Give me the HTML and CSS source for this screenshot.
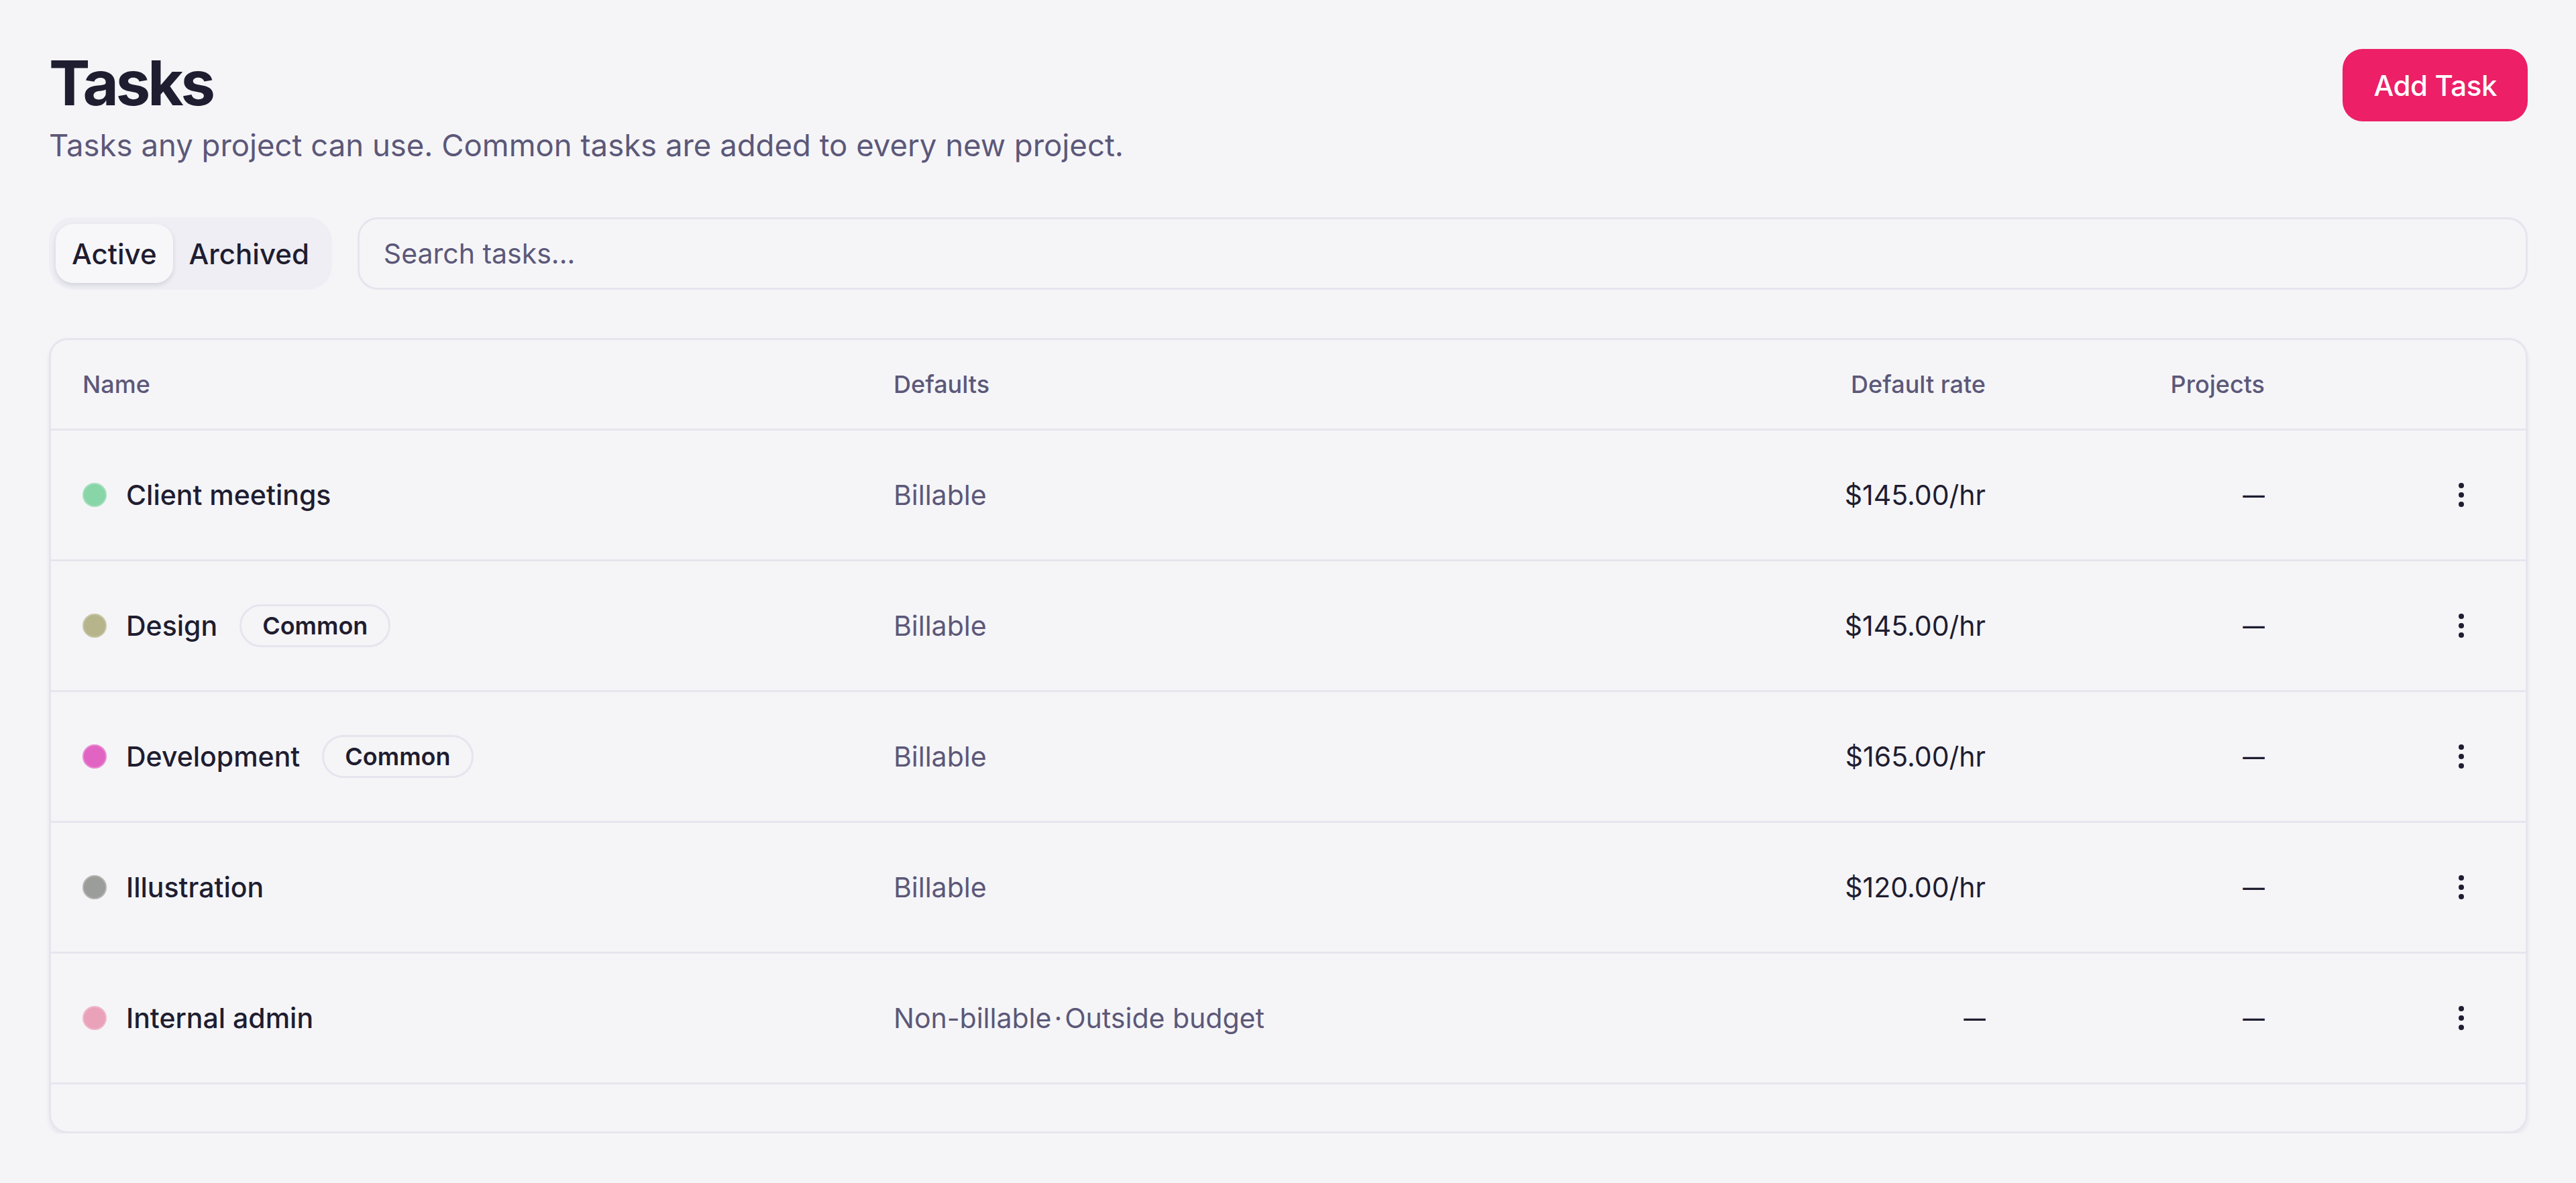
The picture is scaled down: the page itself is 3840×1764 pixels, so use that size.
FILE: index.html
```html
<!DOCTYPE html>
<html lang="en">
<head>
  <meta charset="UTF-8" />
  <title>Tasks</title>
  <link rel="stylesheet" href="styles.css">
</head>
<body>

<div class="page">

  <!-- Page header -->
  <div class="page-head">
    <div>
      <h1>Tasks</h1>
      <p class="subtitle">Tasks any project can use. Common tasks are added to every new project.</p>
    </div>
    <button class="btn-add">Add Task</button>
  </div>

  <!-- Filters -->
  <div class="toolbar">
    <div class="tabs">
      <button class="tab active">Active</button>
      <button class="tab">Archived</button>
    </div>
    <input class="search" type="text" placeholder="Search tasks..." />
  </div>

  <!-- Task list -->
  <div class="card">
    <div class="row head">
      <div>Name</div>
      <div>Defaults</div>
      <div class="num">Default rate</div>
      <div class="num">Projects</div>
      <div></div>
    </div>

    <div class="row">
      <div class="name"><span class="dot dot-green"></span>Client meetings</div>
      <div class="muted">Billable</div>
      <div class="num">$145.00/hr</div>
      <div class="num"><span class="dash">&mdash;</span></div>
      <div class="act"><button class="kebab"><svg width="8" height="36" viewBox="0 0 8 36"><circle cx="4" cy="4" r="4"/><circle cx="4" cy="18" r="4"/><circle cx="4" cy="32" r="4"/></svg></button></div>
    </div>

    <div class="row">
      <div class="name"><span class="dot dot-olive"></span>Design <span class="badge">Common</span></div>
      <div class="muted">Billable</div>
      <div class="num">$145.00/hr</div>
      <div class="num"><span class="dash">&mdash;</span></div>
      <div class="act"><button class="kebab"><svg width="8" height="36" viewBox="0 0 8 36"><circle cx="4" cy="4" r="4"/><circle cx="4" cy="18" r="4"/><circle cx="4" cy="32" r="4"/></svg></button></div>
    </div>

    <div class="row">
      <div class="name"><span class="dot dot-pink"></span>Development <span class="badge">Common</span></div>
      <div class="muted">Billable</div>
      <div class="num">$165.00/hr</div>
      <div class="num"><span class="dash">&mdash;</span></div>
      <div class="act"><button class="kebab"><svg width="8" height="36" viewBox="0 0 8 36"><circle cx="4" cy="4" r="4"/><circle cx="4" cy="18" r="4"/><circle cx="4" cy="32" r="4"/></svg></button></div>
    </div>

    <div class="row">
      <div class="name"><span class="dot dot-gray"></span>Illustration</div>
      <div class="muted">Billable</div>
      <div class="num">$120.00/hr</div>
      <div class="num"><span class="dash">&mdash;</span></div>
      <div class="act"><button class="kebab"><svg width="8" height="36" viewBox="0 0 8 36"><circle cx="4" cy="4" r="4"/><circle cx="4" cy="18" r="4"/><circle cx="4" cy="32" r="4"/></svg></button></div>
    </div>

    <div class="row">
      <div class="name"><span class="dot dot-rose"></span>Internal admin</div>
      <div class="muted">Non-billable<span class="sep">&middot;</span>Outside budget</div>
      <div class="num"><span class="dash">&mdash;</span></div>
      <div class="num"><span class="dash">&mdash;</span></div>
      <div class="act"><button class="kebab"><svg width="8" height="36" viewBox="0 0 8 36"><circle cx="4" cy="4" r="4"/><circle cx="4" cy="18" r="4"/><circle cx="4" cy="32" r="4"/></svg></button></div>
    </div>

    <div class="card-foot"></div>
  </div>

</div>

</body>
</html>
```

FILE: styles.css
```css
body {
  margin: 0;
  background: #f5f5f8;
  font-family: Inter, "Noto Sans", sans-serif;
  color: #1f1d30;
}

.page {
  padding: 73px 72px 0 73px;
}

/* header */
.page-head {
  display: flex;
  justify-content: space-between;
  align-items: flex-start;
}

h1 {
  margin: 0;
  font-size: 92px;
  line-height: 101px;
  font-weight: 700;
  letter-spacing: -0.045em;
}

.subtitle {
  margin: 11px 0 0;
  font-size: 45.5px;
  line-height: 63px;
  color: #5c5878;
}

.btn-add {
  height: 108px;
  padding: 0 46px;
  border: none;
  border-radius: 30px;
  background: #ec1f67;
  color: #fff;
  font-family: inherit;
  font-size: 42px;
  font-weight: 500;
  letter-spacing: -0.01em;
  cursor: pointer;
}

/* toolbar */
.toolbar {
  display: flex;
  gap: 38px;
  margin-top: 76px;
}

.tabs {
  display: flex;
  padding: 10px;
  background: #eeeef4;
  border-radius: 36px;
}

.tab {
  height: 88px;
  padding: 0 24px;
  border: none;
  border-radius: 26px;
  background: transparent;
  color: #1f1d30;
  font-family: inherit;
  font-size: 42px;
  font-weight: 500;
  cursor: pointer;
}

.tab.active {
  background: #f7f7fa;
  box-shadow: 0 3px 7px rgba(30, 25, 60, 0.13);
}

.search {
  flex: 1;
  height: 108px;
  box-sizing: border-box;
  padding: 0 36px;
  border: 3px solid #e6e5ee;
  border-radius: 30px;
  background: #f5f5f8;
  font-family: inherit;
  font-size: 41px;
  color: #1f1d30;
  outline: none;
}

.search::placeholder {
  color: #5c5878;
}

/* table card */
.card {
  margin-top: 72px;
  border: 3px solid #e6e5ee;
  border-radius: 28px;
  box-shadow: 0 4px 6px rgba(30, 25, 60, 0.07);
  overflow: hidden;
}

.row {
  display: grid;
  grid-template-columns: 1209px 1028px 600px 416px 1fr;
  align-items: center;
  height: 192px;
  padding: 0 48px 0 47px;
  border-bottom: 3px solid #e6e5ee;
  font-size: 41px;
}

.row.head {
  height: 132px;
  font-size: 36px;
  font-weight: 500;
  color: #5c5878;
}

.num {
  text-align: right;
}

.dash {
  display: inline-block;
  transform: scaleX(0.8);
  transform-origin: right center;
}

.muted {
  color: #5c5878;
}

.name {
  display: flex;
  align-items: center;
  font-weight: 500;
}

.dot {
  width: 36px;
  height: 36px;
  border-radius: 50%;
  margin-right: 29px;
  box-shadow: inset 0 0 0 2px rgba(255, 255, 255, 0.25);
}

.dot-green { background: #88d5a8; }
.dot-olive { background: #b6b48a; }
.dot-pink  { background: #e264c2; }
.dot-gray  { background: #9b9d9a; }
.dot-rose  { background: #e9a2b9; }

.badge {
  margin-left: 33px;
  padding: 0 31px;
  height: 58px;
  line-height: 58px;
  border: 3px solid #e6e5ee;
  border-radius: 40px;
  font-size: 36px;
  font-weight: 600;
}

.sep {
  margin: 0 4px;
}

.act {
  display: flex;
  justify-content: flex-end;
}

.kebab {
  width: 96px;
  height: 80px;
  border: none;
  background: transparent;
  display: flex;
  align-items: center;
  justify-content: center;
  cursor: pointer;
}

.kebab svg {
  fill: #1f1d30;
}

.card-foot {
  height: 70px;
}
```
